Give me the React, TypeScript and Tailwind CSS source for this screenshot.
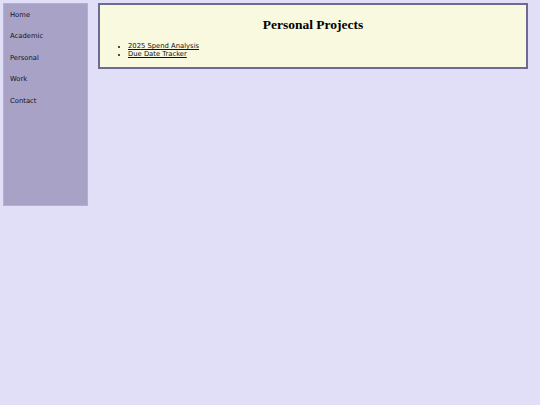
export default function App() {
  const links = ["Home", "Academic", "Personal", "Work", "Contact"];
  const projects = ["2025 Spend Analysis", "Due Date Tracker"];

  return (
    <div
      className="flex items-start min-h-[405px] w-[540px] bg-[#e1dff7] p-[3px] pr-[12px]"
      style={{ fontFamily: '"DejaVu Sans", Verdana, sans-serif' }}
    >
      {/* Sidebar nav */}
      <nav className="w-[85px] h-[203px] shrink-0 bg-[#a7a2c6] border border-[#b3aed3]">
        <ul className="flex flex-col">
          {links.map((l) => (
            <li key={l} className="h-[21.5px] flex items-center pl-[6px] text-[6.8px] text-[#15131f]">
              {l}
            </li>
          ))}
        </ul>
      </nav>

      {/* Main content */}
      <main className="ml-[10px] flex-1 h-[66px] bg-[#f9f9df] border-2 border-[#6f6a92] px-[28px] pt-[11px]">
        <h1
          className="text-center text-[13.5px] font-bold text-black leading-[18px]"
          style={{ fontFamily: '"Liberation Serif", "Times New Roman", serif' }}
        >
          Personal Projects
        </h1>
        <ul className="mt-[8px] list-disc text-[6.8px] leading-[8px] text-[#111]">
          {projects.map((p) => (
            <li key={p} className="marker:text-[5px]">
              <a href="#" className="underline">
                {p}
              </a>
            </li>
          ))}
        </ul>
      </main>
    </div>
  );
}
